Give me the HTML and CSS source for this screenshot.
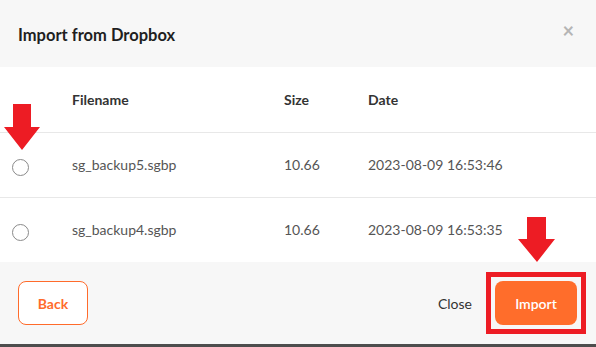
FILE: index.html
```html
<!DOCTYPE html>
<html lang="en">
<head>
  <meta charset="UTF-8" />
  <meta name="viewport" content="width=device-width, initial-scale=1.0" />
  <title>Import from Dropbox</title>
  <link rel="stylesheet" href="styles.css">
</head>
<body>
  <div class="modal">
    <header class="modal-header">
      <h1>Import from Dropbox</h1>
      <span class="modal-close">&times;</span>
    </header>

    <table class="file-table">
      <thead>
        <tr>
          <th class="col-pick"></th>
          <th class="col-name">Filename</th>
          <th class="col-size">Size</th>
          <th>Date</th>
        </tr>
      </thead>
      <tbody>
        <tr>
          <td class="col-pick"><input type="radio" name="backup" /></td>
          <td>sg_backup5.sgbp</td>
          <td>10.66</td>
          <td>2023-08-09 16:53:46</td>
        </tr>
        <tr>
          <td class="col-pick"><input type="radio" name="backup" /></td>
          <td>sg_backup4.sgbp</td>
          <td>10.66</td>
          <td>2023-08-09 16:53:35</td>
        </tr>
      </tbody>
    </table>

    <footer class="modal-footer">
      <button class="btn btn-back">Back</button>
      <span class="btn-close">Close</span>
      <span class="highlight">
        <button class="btn btn-import">Import</button>
      </span>
    </footer>

    <!-- annotation arrows -->
    <svg class="arrow arrow-left" width="38" height="47" viewBox="0 0 38 47">
      <polygon points="10,0 28,0 28,23 37,23 19,46 1,23 10,23" fill="#ed1c24" />
    </svg>
    <svg class="arrow arrow-right" width="38" height="46" viewBox="0 0 38 46">
      <polygon points="9,0 28,0 28,22 37,22 19,45 0,22 9,22" fill="#ed1c24" />
    </svg>
  </div>
</body>
</html>
```

FILE: styles.css
```css
* {
  margin: 0;
  padding: 0;
  box-sizing: border-box;
}

html {
  font-family: "Lato", "Open Sans", sans-serif;
}

body {
  background-color: #fff;
  color: #333;
}

.modal {
  position: relative;
  width: 596px;
  height: 347px;
  display: flex;
  flex-direction: column;
  background-color: #fff;
}

.modal-header {
  height: 67px;
  padding: 0 22px 0 18px;
  display: flex;
  align-items: center;
  justify-content: space-between;
  background-color: #f7f7f7;
}

.modal-header h1 {
  font-size: 16.5px;
  font-weight: 700;
  color: #1f1f1f;
  margin-top: 2px;
}

.modal-close {
  font-size: 20px;
  font-weight: 700;
  color: #b5b5b5;
  margin-top: -8px;
}

.file-table {
  width: 100%;
  border-collapse: collapse;
  font-size: 14px;
}

.file-table th,
.file-table td {
  height: 65px;
  text-align: left;
  vertical-align: middle;
}

.file-table th {
  font-weight: 700;
  color: #333;
}

.file-table td {
  color: #555;
}

.file-table thead tr,
.file-table tbody tr:first-child {
  border-bottom: 1px solid #e8e8e8;
}

.col-pick {
  width: 72px;
  padding-left: 12px;
}

.col-name {
  width: 212px;
}

.col-size {
  width: 84px;
}

.col-pick input {
  appearance: none;
  width: 17px;
  height: 17px;
  margin: 6px 0 0 0;
  display: block;
  border: 1px solid #8a8a8a;
  border-radius: 50%;
  background-color: #fff;
}

.modal-footer {
  flex: 1;
  padding: 0 19px 0 18px;
  display: flex;
  align-items: center;
  background-color: #f7f7f7;
  border-bottom: 3px solid #4d4d4d;
}

.btn {
  height: 44px;
  border-radius: 8px;
  font-family: inherit;
  font-size: 14px;
  font-weight: 700;
  cursor: pointer;
}

.btn-back {
  width: 70px;
  background-color: #fff;
  color: #ff6b2b;
  border: 1px solid #ff6b2b;
}

.btn-close {
  margin-left: auto;
  margin-right: 14px;
  font-size: 14px;
  color: #333;
}

.highlight {
  display: flex;
  margin: -9px -9px -9px 0;
  padding: 4px;
  border: 5px solid #ed1c24;
}

.btn-import {
  width: 82px;
  background-color: #ff6d2b;
  color: #fff;
  border: none;
  font-weight: 600;
}

.arrow {
  position: absolute;
}

.arrow-left {
  left: 3px;
  top: 104px;
}

.arrow-right {
  left: 518px;
  top: 217px;
}
```
